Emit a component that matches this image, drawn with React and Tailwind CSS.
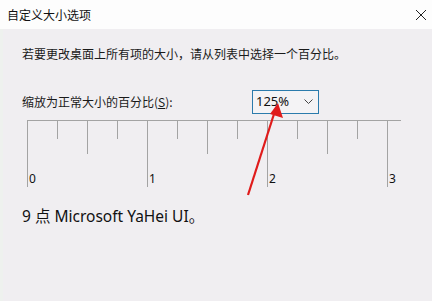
import React from 'react';

const cjk = { fontFamily: '"Noto Sans CJK SC", "Noto Sans", sans-serif' };

function Ruler() {
  const ticks = [];
  for (let i = 0; i <= 12; i++) {
    const x = 0.5 + i * 30;
    const h = i % 4 === 0 ? 67 : i % 2 === 0 ? 34 : 19;
    ticks.push(<line key={i} x1={x} y1={0} x2={x} y2={h} stroke="#a3a3a3" strokeWidth="1" />);
  }
  return (
    <svg width="375" height="70" className="block">
      <line x1="0" y1="0.5" x2="374" y2="0.5" stroke="#a3a3a3" strokeWidth="1" />
      {ticks}
    </svg>
  );
}

export default function App() {
  return (
    <div className="relative w-[432px] h-[301px] overflow-hidden bg-[#f0eef1] flex flex-col" style={cjk}>
      <div className="h-[29px] bg-[#fdfdfd] flex items-center justify-between pl-[7px] pr-[3px]">
        <span className="text-[12px] text-[#111]">自定义大小选项</span>
        <svg width="12" height="12" viewBox="0 0 12 12" className="mr-[2px]">
          <path d="M1 1 L11 11 M11 1 L1 11" stroke="#222" strokeWidth="1" />
        </svg>
      </div>
      <div className="flex-1 border-l-[3px] border-[#eef1ee] pl-[19px]">
        <p className="mt-[16px] text-[12px] leading-[18px] text-[#1a1a1a]">若要更改桌面上所有项的大小，请从列表中选择一个百分比。</p>
        <div className="mt-[27px] flex items-center">
          <span className="text-[12px] leading-[18px] text-[#1a1a1a] w-[230px]">缩放为正常大小的百分比(<span className="underline">S</span>):</span>
          <div className="w-[67px] h-[24px] border border-[#2b7bac] bg-[#f4f3f5] flex items-center justify-between pl-[3px] pr-[5px]">
            <span className="text-[13px] text-[#111]" style={{ fontFamily: '"Noto Sans", sans-serif' }}>125%</span>
            <svg width="9" height="6" viewBox="0 0 9 6">
              <path d="M0.5 0.5 L4.5 4.5 L8.5 0.5" fill="none" stroke="#444" strokeWidth="1" />
            </svg>
          </div>
        </div>
        <div className="relative mt-[6px] ml-[5px]">
          <Ruler />
          <div className="absolute top-[50px] left-0 flex text-[12px] text-[#111]" style={{ fontFamily: '"Noto Sans", sans-serif' }}>
            <span className="absolute left-[2px]">0</span>
            <span className="absolute left-[122px]">1</span>
            <span className="absolute left-[242px]">2</span>
            <span className="absolute left-[362px]">3</span>
          </div>
        </div>
        <p className="mt-[15px] text-[15.5px] text-[#111]" style={{ fontFamily: '"Noto Sans", "Noto Sans CJK SC", sans-serif' }}>9 点 Microsoft YaHei UI。</p>
      </div>
      <svg className="absolute left-0 top-0" width="432" height="301">
        <line x1="248" y1="195" x2="274" y2="114" stroke="#e01b1b" strokeWidth="2.2" />
        <polygon points="278,103 283,118 270,114" fill="#e01b1b" />
      </svg>
    </div>
  );
}
